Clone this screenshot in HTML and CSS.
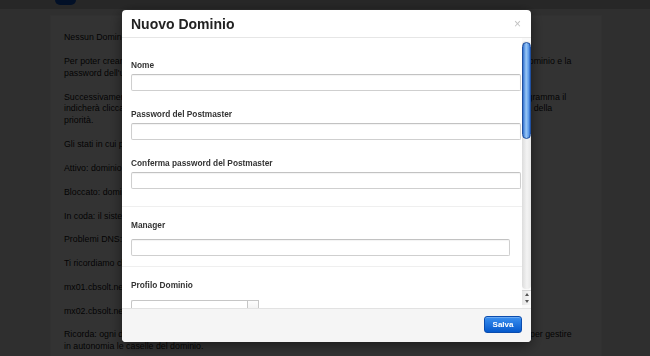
FILE: index.html
```html
<!DOCTYPE html>
<html lang="it">
<head>
  <meta charset="UTF-8" />
  <meta name="viewport" content="width=device-width, initial-scale=1.0"/>
  <title>Domini</title>
  <link rel="stylesheet" href="styles.css">
</head>
<body>
  <!-- Pagina sotto il modale -->
  <div class="topbar">
    <div class="logo"></div>
  </div>

  <div class="page">
    <div class="panel">
      <p>Nessun Dominio presente.</p>
      <p>Per poter creare un nuovo dominio è sufficiente cliccare sul pulsante Nuovo Dominio posto in alto, inserire il nome del dominio e la<br>
        password dell'utente postmaster.</p>
      <p>Successivamente il dominio verrà inserito automaticamente nella coda di creazione e lo stato della procedura che il programma il<br>
        indicherà cliccando sull'icona accanto al nome del dominio, dove potrai verificare lo stato e richiedere una nuova verifica della<br>
        priorità.</p>
      <p>Gli stati in cui può trovarsi un dominio sono:</p>
      <p>Attivo: dominio configurato correttamente e funzionante.</p>
      <p>Bloccato: dominio sospeso dall'amministratore.</p>
      <p>In coda: il sistema sta ancora creando il dominio.</p>
      <p>Problemi DNS: i record MX del dominio non puntano ai nostri server.</p>
      <p>Ti ricordiamo che i record MX del dominio devono essere:</p>
      <p>mx01.cbsolt.net</p>
      <p>mx02.cbsolt.net</p>
      <p>Ricorda: ogni dominio ha il proprio utente postmaster, puoi assegnare un manager al dominio, utile pure come controllo per gestire<br>
        in autonomia le caselle del dominio.</p>
    </div>
  </div>

  <div class="backdrop"></div>

  <!-- Modale Nuovo Dominio -->
  <div class="modal">
    <div class="modal-header">
      <h3>Nuovo Dominio</h3>
      <span class="close">×</span>
    </div>

    <div class="modal-main">
      <div class="modal-body">
        <div class="section first">
          <div class="field">
            <label>Nome</label>
            <input type="text">
          </div>
          <div class="field">
            <label>Password del Postmaster</label>
            <input type="password">
          </div>
          <div class="field">
            <label>Conferma password del Postmaster</label>
            <input type="password">
          </div>
        </div>

        <div class="section manager">
          <label>Manager</label>
          <input type="text">
        </div>

        <div class="section">
          <div class="field">
            <label>Profilo Dominio</label>
            <div class="combo">
              <span class="combo-value"></span>
              <span class="combo-btn">
                <svg width="6" height="6" viewBox="0 0 6 6"><path d="M1 2.5 L3 4.5 L5 2.5" fill="none" stroke="#777" stroke-width="1"/></svg>
              </span>
            </div>
          </div>
          <div class="field">
            <label>Spazio disco (MB)</label>
            <input type="text">
          </div>
        </div>
      </div>

      <!-- barra di scorrimento -->
      <div class="scrollbar">
        <div class="scroll-track">
          <div class="scroll-thumb"></div>
        </div>
        <div class="scroll-arrows">
          <span class="arrow up"></span>
          <span class="arrow down"></span>
        </div>
      </div>
    </div>

    <div class="modal-footer">
      <button class="btn-primary">Salva</button>
    </div>
  </div>
</body>
</html>
```

FILE: styles.css
```css
body {
  margin: 0;
  padding: 0;
  height: 100vh;
  overflow: hidden;
  background: #e9e9e9;
  font-family: "Liberation Sans", Arial, sans-serif;
  color: #222;
}

/* pagina di sfondo */
.topbar {
  height: 9px;
  background: #c4c4c4;
  display: flex;
}
.topbar .logo {
  width: 21px;
  height: 5px;
  margin-left: 55px;
  background: #0b50c4;
  border-radius: 0 0 6px 6px;
}
.page {
  padding: 6px 0 0 50px;
}
.panel {
  width: 524px;
  min-height: 400px;
  padding: 16px 13px;
  background: #fff;
  border: 1px solid #f4f4f4;
  white-space: nowrap;
  font-size: 8.8px;
  line-height: 11.9px;
  color: #111;
}
.panel p {
  margin: 0 0 11.9px;
}

.backdrop {
  position: fixed;
  top: 0; left: 0; right: 0; bottom: 0;
  background: rgba(0,0,0,0.8);
}

/* modale */
.modal {
  position: fixed;
  left: 122px;
  top: 10px;
  width: 409px;
  background: #fff;
  border-radius: 4px;
  box-shadow: 0 3px 14px rgba(0,0,0,0.5);
  overflow: hidden;
}
.modal-header {
  height: 28px;
  padding: 1px 9px 0;
  box-sizing: border-box;
  border-bottom: 1px solid #e6e6e6;
  display: flex;
  align-items: center;
  justify-content: space-between;
}
.modal-header h3 {
  margin: 0;
  font-size: 14px;
  font-weight: bold;
  color: #222;
}
.modal-header .close {
  font-size: 12px;
  color: #c2c2c2;
  margin-right: 1px;
}

.modal-main {
  display: flex;
  height: 270px;
}
.modal-body {
  flex: 1;
  overflow: hidden;
}

.scrollbar {
  width: 9px;
  display: flex;
  flex-direction: column;
  padding: 3px 0 3px;
  box-sizing: border-box;
  background: #fafafa;
}
.scroll-track {
  flex: 1;
  background: linear-gradient(to right, #dcdcdc, #f3f3f3 55%, #e6e6e6);
  border-radius: 4px;
  padding-top: 1px;
}
.scroll-thumb {
  height: 97px;
  box-sizing: border-box;
  border: 1px solid #1f4f9e;
  border-radius: 5px;
  background: linear-gradient(to right, #2f6fd0, #9ac8f6 45%, #5f9ce8 80%, #2d68c8);
}
.scroll-arrows {
  height: 14px;
  margin-top: 1px;
  display: flex;
  flex-direction: column;
  align-items: center;
  justify-content: space-around;
  background: linear-gradient(to right, #e4e4e4, #f8f8f8);
  border-top: 1px solid #d4d4d4;
}
.arrow {
  width: 0;
  height: 0;
  border-left: 2px solid transparent;
  border-right: 2px solid transparent;
}
.arrow.up {
  border-bottom: 3px solid #555;
}
.arrow.down {
  border-top: 3px solid #555;
}

.section {
  padding: 12px 1px 0 9px;
  border-bottom: 1px solid #efefef;
}
.section.first {
  padding-top: 21px;
}
.section.manager {
  padding-bottom: 10px;
}
.section.manager label {
  margin-bottom: 8px;
}
.section.manager input {
  width: 379px;
}

label {
  display: block;
  font-size: 8.3px;
  line-height: 12px;
  font-weight: bold;
  color: #333;
  margin-bottom: 3px;
}
.field {
  margin-bottom: 17px;
}
.section:not(.first) .field > label {
  margin-bottom: 9px;
}
input {
  display: block;
  width: 390px;
  height: 17px;
  box-sizing: border-box;
  margin: 0;
  border: 1px solid #cfcfcf;
  border-top-color: #c2c2c2;
  border-radius: 2px;
  box-shadow: inset 0 1px 1px rgba(0,0,0,0.05);
  background: #fff;
  font: 9px "Liberation Sans", Arial, sans-serif;
}

.combo {
  display: flex;
  height: 17px;
}
.combo-value {
  width: 116px;
  border: 1px solid #c6c6c6;
  border-right: none;
  border-radius: 2px 0 0 2px;
  box-sizing: border-box;
}
.combo-btn {
  width: 12px;
  box-sizing: border-box;
  border: 1px solid #c6c6c6;
  background: linear-gradient(#fdfdfd, #e8e8e8);
  display: flex;
  align-items: center;
  justify-content: center;
}

.modal-footer {
  border-top: 1px solid #e2e2e2;
  background: #f5f5f5;
  padding: 7px 9px 9px;
  display: flex;
  justify-content: flex-end;
}
.btn-primary {
  width: 38px;
  height: 17px;
  padding: 0;
  border: 1px solid #0a4cae;
  border-radius: 3px;
  background: linear-gradient(#3a8ff0, #0559cc);
  color: #fff;
  font: bold 8px "Liberation Sans", Arial, sans-serif;
  box-shadow: inset 0 1px 0 rgba(255,255,255,0.25);
}
```
